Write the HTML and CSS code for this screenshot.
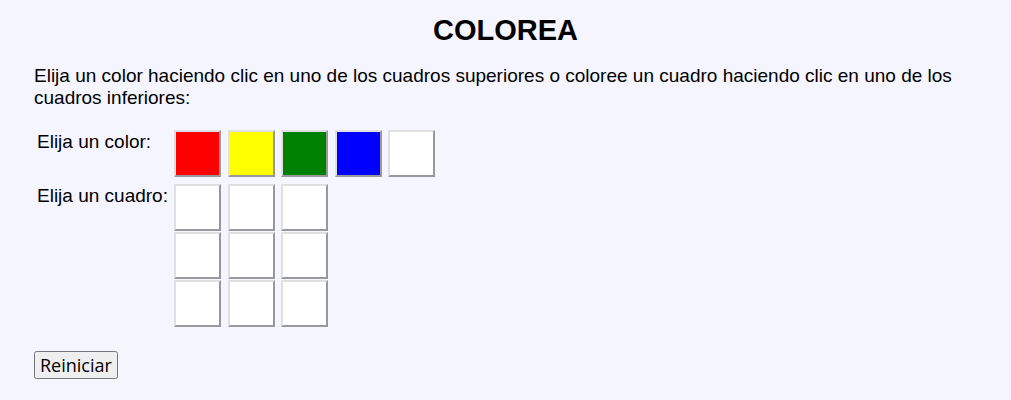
FILE: index.html
```html
<!DOCTYPE html>
<html>
<head>
    <title>Colorea</title>
    <link rel="stylesheet" href="styles.css">
</head>
<body>
    <h1>COLOREA</h1>
    <p class="intro">Elija un color haciendo clic en uno de los cuadros superiores o coloree un cuadro haciendo clic en uno de los cuadros inferiores:</p>

    <div class="juego">
        <div class="fila fila-color">
            <span class="etiqueta">Elija un color:</span>
            <div class="paleta">
                <div class="cuadro rojo"></div>
                <div class="cuadro amarillo"></div>
                <div class="cuadro verde"></div>
                <div class="cuadro azul"></div>
                <div class="cuadro blanco"></div>
            </div>
        </div>
        <div class="fila">
            <span class="etiqueta">Elija un cuadro:</span>
            <div class="tablero">
                <div class="cuadro"></div>
                <div class="cuadro"></div>
                <div class="cuadro"></div>
                <div class="cuadro"></div>
                <div class="cuadro"></div>
                <div class="cuadro"></div>
                <div class="cuadro"></div>
                <div class="cuadro"></div>
                <div class="cuadro"></div>
            </div>
        </div>
    </div>

    <button class="reiniciar">Reiniciar</button>
</body>
</html>
```

FILE: styles.css
```css
body { font-family: "Liberation Sans", Arial, sans-serif; font-size: 19px; background: #f5f5ff; color: #000; margin: 0; padding: 0 34px; }
h1 { font-size: 29px; text-align: center; margin: 13px 0 0; line-height: 34px; }
.intro { margin: 18px 0 0; line-height: 22px; }
.juego { margin-top: 21px; }
.fila { display: flex; }
.fila-color { margin-bottom: 7px; }
.etiqueta { width: 137px; padding-left: 3px; padding-top: 1px; flex-shrink: 0; }
.paleta { display: flex; gap: 6.5px; }
.tablero { display: grid; grid-template-columns: repeat(3, 47px); column-gap: 6.5px; row-gap: 1px; }
.cuadro { width: 43px; height: 43px; background: white; border: 2px solid; border-color: #e0e0e0 #999 #999 #e0e0e0; }
.rojo { background: red; }
.amarillo { background: yellow; }
.verde { background: green; }
.azul { background: blue; }
.reiniciar { margin-top: 24px; font-family: "Open Sans", sans-serif; font-size: 18px; line-height: 22px; padding: 1px 4px; }
```
